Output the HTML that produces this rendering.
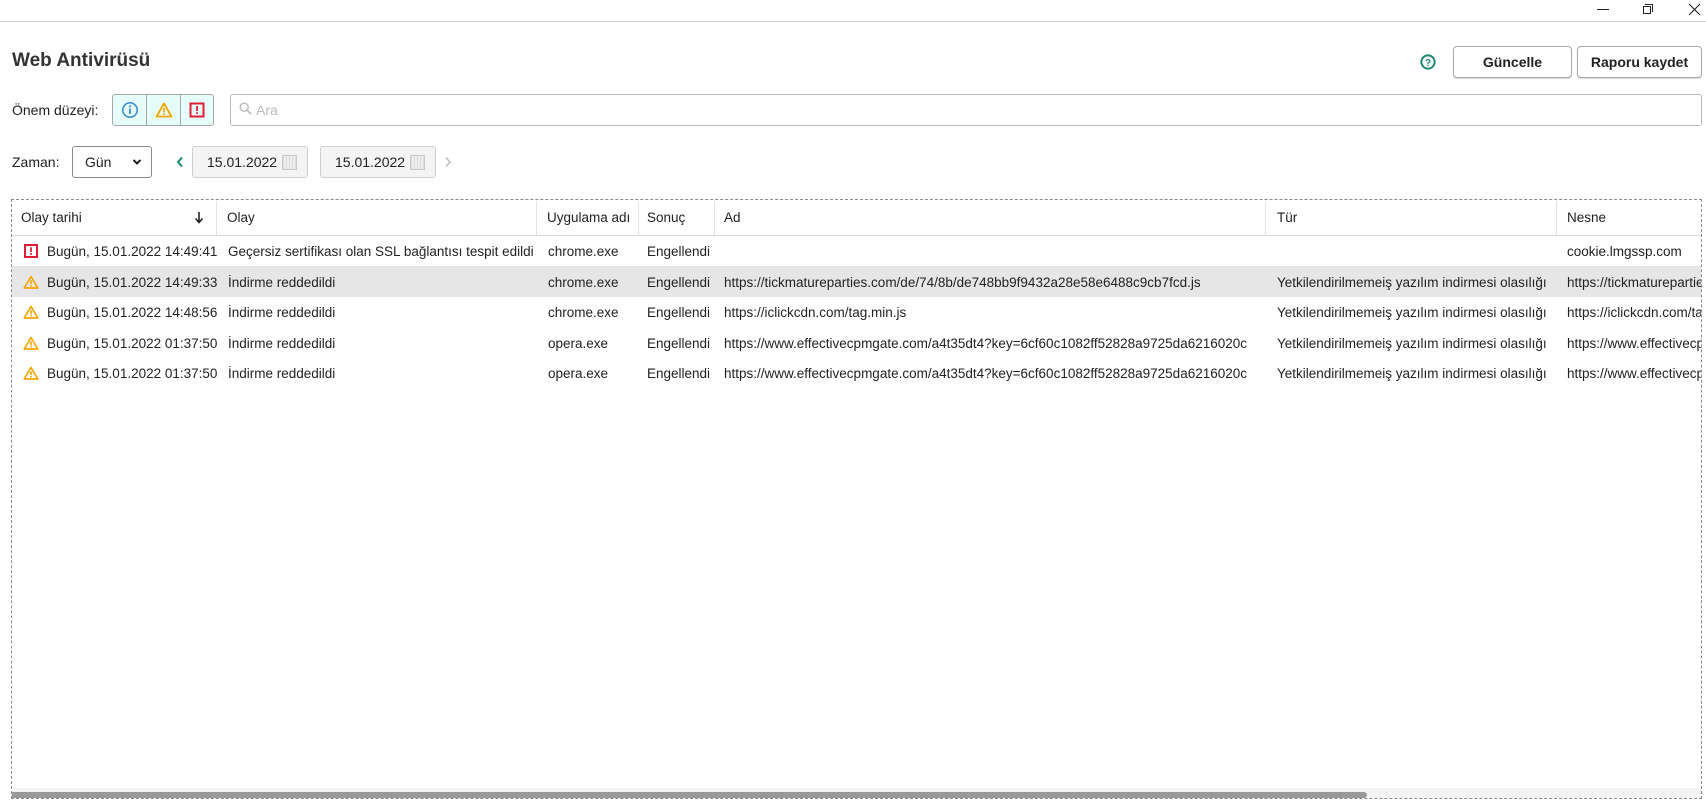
<!DOCTYPE html>
<html><head><meta charset="utf-8"><style>
*{box-sizing:border-box;margin:0;padding:0}
body{width:1706px;height:809px;background:#fff;font-family:"Liberation Sans",sans-serif;color:#222;position:relative;overflow:hidden;font-size:14px}
.a{position:absolute}
.btn{position:absolute;border:1px solid #a8a8a8;border-radius:4px;background:#fff;font-weight:bold;font-size:14px;display:flex;align-items:center;justify-content:center;box-shadow:0 1px 1px rgba(0,0,0,.15)}
.lbl{position:absolute;font-size:14px;color:#222}
.date{position:absolute;background:#f4f4f4;border:1px solid #d0d0d0;border-radius:3px;font-size:14px;padding-left:14px;display:flex;align-items:center}
.cal{position:absolute;right:10px;top:8px;width:15px;height:15px;border:1px solid #c8c8c8;background:repeating-linear-gradient(90deg,#ddd 0 1px,transparent 1px 3px),#eee}
.cell{position:absolute;white-space:nowrap;overflow:hidden;font-size:13.5px;color:#222}
.hd{position:absolute;top:1px;height:34px;border-right:1px solid #e3e3e3}
</style></head><body>
<div class="a" style="left:0;top:21px;width:1706px;height:1px;background:#cfcfcf"></div>
<div class="a" style="left:1597px;top:9px;width:12px;height:1px;background:#222"></div>
<div class="a" style="left:1643px;top:6px;width:8px;height:8px;border:1px solid #222"></div>
<div class="a" style="left:1645px;top:4px;width:8px;height:8px;border-top:1px solid #222;border-right:1px solid #222"></div>
<svg class="a" style="left:1688px;top:3px" width="13" height="13"><path d="M1 1L12 12M12 1L1 12" stroke="#222" stroke-width="1.1"/></svg>

<div class="a" style="left:12px;top:50px;font-size:19px;font-weight:bold;color:#333">Web Antivirüsü</div>
<svg class="a" style="left:1420px;top:54px" width="16" height="16"><circle cx="8" cy="8" r="6.6" fill="none" stroke="#1a8a6e" stroke-width="2"/><text x="8" y="12" text-anchor="middle" font-size="10" font-weight="bold" fill="#1a8a6e" font-family="Liberation Sans">?</text></svg>
<div class="btn" style="left:1453px;top:46px;width:119px;height:32px">Güncelle</div>
<div class="btn" style="left:1577px;top:46px;width:125px;height:32px">Raporu kaydet</div>

<div class="lbl" style="left:12px;top:102px">Önem düzeyi:</div>
<div class="a" style="left:112px;top:94px;width:102px;height:32px;border:1px solid #a8a8a8;border-radius:3px;background:#e6fcf9;display:flex">
 <div style="width:34px;border-right:1px solid #a8a8a8;display:flex;align-items:center;justify-content:center"><svg width="18" height="18"><circle cx="9" cy="9" r="7.2" fill="none" stroke="#3d8fd1" stroke-width="1.6"/><rect x="8.1" y="7.5" width="1.8" height="5.5" fill="#3d8fd1"/><circle cx="9" cy="5.3" r="1.1" fill="#3d8fd1"/></svg></div>
 <div style="width:34px;border-right:1px solid #a8a8a8;display:flex;align-items:center;justify-content:center"><svg width="18" height="16"><path d="M9 1.5L16.5 14.5H1.5Z" fill="none" stroke="#f5a500" stroke-width="1.8" stroke-linejoin="round"/><rect x="8.2" y="6" width="1.6" height="4.5" fill="#f5a500"/><rect x="8.2" y="11.3" width="1.6" height="1.6" fill="#f5a500"/></svg></div>
 <div style="flex:1;display:flex;align-items:center;justify-content:center"><svg width="16" height="16"><rect x="1.5" y="1.5" width="13" height="13" fill="none" stroke="#e01e35" stroke-width="2"/><rect x="7.1" y="4" width="1.8" height="5" fill="#e01e35"/><rect x="7.1" y="10.3" width="1.8" height="1.8" fill="#e01e35"/></svg></div>
</div>
<div class="a" style="left:230px;top:94px;width:1472px;height:32px;border:1px solid #b8b8b8;border-radius:3px"></div>
<svg class="a" style="left:239px;top:102px" width="13" height="13"><circle cx="5.2" cy="5.2" r="4" fill="none" stroke="#bbb" stroke-width="1.4"/><path d="M8 8L12 12" stroke="#bbb" stroke-width="1.6"/></svg>
<div class="a" style="left:256px;top:102px;color:#bbb;font-size:14px">Ara</div>

<div class="lbl" style="left:12px;top:154px">Zaman:</div>
<div class="a" style="left:72px;top:146px;width:80px;height:32px;border:1px solid #8a8a8a;border-radius:3px;font-size:14px;padding:7px 0 0 12px">Gün</div>
<svg class="a" style="left:132px;top:158px" width="10" height="8"><path d="M1.5 2L5 5.5L8.5 2" fill="none" stroke="#222" stroke-width="2"/></svg>
<svg class="a" style="left:176px;top:156px" width="8" height="12"><path d="M6 1.5L2 6L6 10.5" fill="none" stroke="#1a8a6e" stroke-width="2"/></svg>
<div class="date" style="left:192px;top:146px;width:116px;height:32px">15.01.2022<div class="cal"></div></div>
<div class="date" style="left:320px;top:146px;width:116px;height:32px">15.01.2022<div class="cal"></div></div>
<svg class="a" style="left:444px;top:156px" width="8" height="12"><path d="M2 1.5L6 6L2 10.5" fill="none" stroke="#bbb" stroke-width="1.5"/></svg>

<div class="a" style="left:11px;top:199px;width:1691px;height:600px;border:1px dashed #8a8a8a;overflow:hidden">
 <div class="a" style="left:0;top:35px;width:1700px;height:1px;background:#d8d8d8"></div>
 <div class="hd" style="left:0;width:205px"></div>
 <div class="hd" style="left:205px;width:320px"></div>
 <div class="hd" style="left:525px;width:102px"></div>
 <div class="hd" style="left:627px;width:76px"></div>
 <div class="hd" style="left:703px;width:551px"></div>
 <div class="hd" style="left:1254px;width:291px"></div>
 <div class="cell" style="left:9px;top:10px">Olay tarihi</div>
 <svg class="a" style="left:182px;top:11px" width="10" height="13"><path d="M5 1V11M1.5 7.5L5 11.5L8.5 7.5" fill="none" stroke="#222" stroke-width="1.6"/></svg>
 <div class="cell" style="left:215px;top:10px">Olay</div>
 <div class="cell" style="left:535px;top:10px">Uygulama adı</div>
 <div class="cell" style="left:635px;top:10px">Sonuç</div>
 <div class="cell" style="left:712px;top:10px">Ad</div>
 <div class="cell" style="left:1265px;top:10px">Tür</div>
 <div class="cell" style="left:1555px;top:10px">Nesne</div>

 <div class="a" style="left:0;top:66px;width:1690px;height:31px;background:#e6e6e6"></div>

 <svg class="a" style="left:12px;top:44px" width="14" height="14"><rect x="1" y="1" width="12" height="12" fill="none" stroke="#e01e35" stroke-width="2"/><rect x="6.1" y="3.3" width="1.8" height="4.6" fill="#e01e35"/><rect x="6.1" y="9" width="1.8" height="1.8" fill="#e01e35"/></svg>
 <div class="cell" style="left:35px;top:44px;width:170px">Bugün, 15.01.2022 14:49:41</div>
 <div class="cell" style="left:216px;top:44px;width:308px">Geçersiz sertifikası olan SSL bağlantısı tespit edildi</div>
 <div class="cell" style="left:536px;top:44px">chrome.exe</div>
 <div class="cell" style="left:635px;top:44px">Engellendi</div>
 <div class="cell" style="left:1555px;top:44px">cookie.lmgssp.com</div>

 <svg class="a" style="left:11px;top:75px" width="16" height="14"><path d="M8 1.5L14.8 13H1.2Z" fill="none" stroke="#f5a500" stroke-width="1.7" stroke-linejoin="round"/><rect x="7.2" y="5.2" width="1.6" height="4" fill="#f5a500"/><rect x="7.2" y="10" width="1.6" height="1.5" fill="#f5a500"/></svg>
 <div class="cell" style="left:35px;top:75px;width:170px">Bugün, 15.01.2022 14:49:33</div>
 <div class="cell" style="left:216px;top:75px">İndirme reddedildi</div>
 <div class="cell" style="left:536px;top:75px">chrome.exe</div>
 <div class="cell" style="left:635px;top:75px">Engellendi</div>
 <div class="cell" style="left:712px;top:75px;width:540px">https://tickmatureparties.com/de/74/8b/de748bb9f9432a28e58e6488c9cb7fcd.js</div>
 <div class="cell" style="left:1265px;top:75px;width:288px">Yetkilendirilmemeiş yazılım indirmesi olasılığı</div>
 <div class="cell" style="left:1555px;top:75px;width:135px">https://tickmatureparties.com</div>

 <svg class="a" style="left:11px;top:105px" width="16" height="14"><path d="M8 1.5L14.8 13H1.2Z" fill="none" stroke="#f5a500" stroke-width="1.7" stroke-linejoin="round"/><rect x="7.2" y="5.2" width="1.6" height="4" fill="#f5a500"/><rect x="7.2" y="10" width="1.6" height="1.5" fill="#f5a500"/></svg>
 <div class="cell" style="left:35px;top:105px;width:170px">Bugün, 15.01.2022 14:48:56</div>
 <div class="cell" style="left:216px;top:105px">İndirme reddedildi</div>
 <div class="cell" style="left:536px;top:105px">chrome.exe</div>
 <div class="cell" style="left:635px;top:105px">Engellendi</div>
 <div class="cell" style="left:712px;top:105px;width:540px">https://iclickcdn.com/tag.min.js</div>
 <div class="cell" style="left:1265px;top:105px;width:288px">Yetkilendirilmemeiş yazılım indirmesi olasılığı</div>
 <div class="cell" style="left:1555px;top:105px;width:135px">https://iclickcdn.com/tag.min.js</div>

 <svg class="a" style="left:11px;top:136px" width="16" height="14"><path d="M8 1.5L14.8 13H1.2Z" fill="none" stroke="#f5a500" stroke-width="1.7" stroke-linejoin="round"/><rect x="7.2" y="5.2" width="1.6" height="4" fill="#f5a500"/><rect x="7.2" y="10" width="1.6" height="1.5" fill="#f5a500"/></svg>
 <div class="cell" style="left:35px;top:136px;width:170px">Bugün, 15.01.2022 01:37:50</div>
 <div class="cell" style="left:216px;top:136px">İndirme reddedildi</div>
 <div class="cell" style="left:536px;top:136px">opera.exe</div>
 <div class="cell" style="left:635px;top:136px">Engellendi</div>
 <div class="cell" style="left:712px;top:136px;width:540px">https://www.effectivecpmgate.com/a4t35dt4?key=6cf60c1082ff52828a9725da6216020c</div>
 <div class="cell" style="left:1265px;top:136px;width:288px">Yetkilendirilmemeiş yazılım indirmesi olasılığı</div>
 <div class="cell" style="left:1555px;top:136px;width:135px">https://www.effectivecpmgate.com</div>

 <svg class="a" style="left:11px;top:166px" width="16" height="14"><path d="M8 1.5L14.8 13H1.2Z" fill="none" stroke="#f5a500" stroke-width="1.7" stroke-linejoin="round"/><rect x="7.2" y="5.2" width="1.6" height="4" fill="#f5a500"/><rect x="7.2" y="10" width="1.6" height="1.5" fill="#f5a500"/></svg>
 <div class="cell" style="left:35px;top:166px;width:170px">Bugün, 15.01.2022 01:37:50</div>
 <div class="cell" style="left:216px;top:166px">İndirme reddedildi</div>
 <div class="cell" style="left:536px;top:166px">opera.exe</div>
 <div class="cell" style="left:635px;top:166px">Engellendi</div>
 <div class="cell" style="left:712px;top:166px;width:540px">https://www.effectivecpmgate.com/a4t35dt4?key=6cf60c1082ff52828a9725da6216020c</div>
 <div class="cell" style="left:1265px;top:166px;width:288px">Yetkilendirilmemeiş yazılım indirmesi olasılığı</div>
 <div class="cell" style="left:1555px;top:166px;width:135px">https://www.effectivecpmgate.com</div>

 <div class="a" style="left:0;top:588px;width:1690px;height:11px;background:#f3f3f3"></div>
 <div class="a" style="left:0;top:592px;width:1355px;height:6px;background:#999;border-radius:0 3px 3px 0"></div>
</div>
</body></html>
